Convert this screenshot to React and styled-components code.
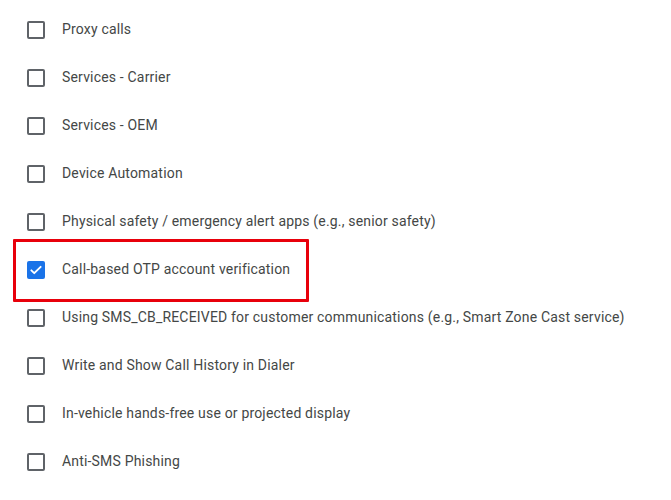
import React from 'react'
import styled, { createGlobalStyle } from 'styled-components'

const GlobalStyle = createGlobalStyle`
  body {
    margin: 0;
    background: #fff;
    font-family: Roboto, 'Liberation Sans', Arial, sans-serif;
  }
`

const List = styled.ul`
  list-style: none;
  margin: 0;
  padding: 6px 0 0 27px;
`

const Row = styled.li`
  position: relative;
  display: flex;
  align-items: center;
  gap: 17px;
  height: 48px;
  width: fit-content;

  ${({ $highlight }) => $highlight && `
    &::after {
      content: '';
      position: absolute;
      top: -7px;
      bottom: -8px;
      left: -14px;
      right: -19px;
      border: 3px solid #e8000b;
      border-radius: 1px;
      pointer-events: none;
    }
  `}
`

const Box = styled.span`
  box-sizing: border-box;
  width: 18px;
  height: 18px;
  flex: none;
  border-radius: 2px;
  display: flex;
  align-items: center;
  justify-content: center;
  border: ${({ $checked }) => ($checked ? 'none' : '2px solid #5f6368')};
  background: ${({ $checked }) => ($checked ? '#1a73e8' : 'transparent')};
`

const Label = styled.span`
  font-size: 14px;
  line-height: 20px;
  margin-top: -2px;
  color: #444746;
  letter-spacing: 0.18px;
  white-space: nowrap;
`

const items = [
  'Proxy calls',
  'Services - Carrier',
  'Services - OEM',
  'Device Automation',
  'Physical safety / emergency alert apps (e.g., senior safety)',
  'Call-based OTP account verification',
  'Using SMS_CB_RECEIVED for customer communications (e.g., Smart Zone Cast service)',
  'Write and Show Call History in Dialer',
  'In-vehicle hands-free use or projected display',
  'Anti-SMS Phishing',
]

const checkedItem = 'Call-based OTP account verification'

const Check = () => (
  <svg width="14" height="14" viewBox="0 0 24 24" fill="none">
    <path d="M4 12.5l5 5L20 6.5" stroke="#fff" strokeWidth="3.2" strokeLinecap="round" strokeLinejoin="round" />
  </svg>
)

const App = () => (
  <>
    <GlobalStyle />
    <List>
      {items.map(item => {
        const checked = item === checkedItem
        return (
          <Row key={item} $highlight={checked}>
            <Box $checked={checked}>{checked && <Check />}</Box>
            <Label>{item}</Label>
          </Row>
        )
      })}
    </List>
  </>
)

export default App
